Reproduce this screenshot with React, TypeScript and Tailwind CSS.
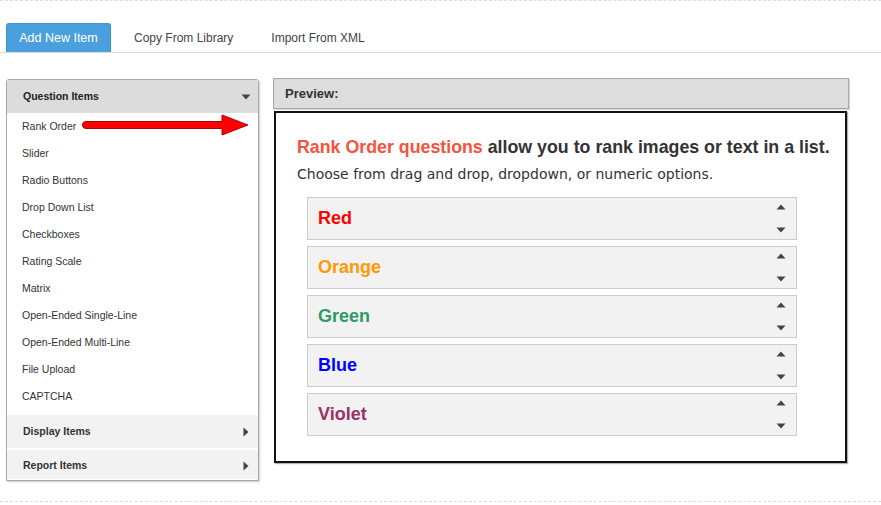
import React from "react";

const items = [
  "Rank Order",
  "Slider",
  "Radio Buttons",
  "Drop Down List",
  "Checkboxes",
  "Rating Scale",
  "Matrix",
  "Open-Ended Single-Line",
  "Open-Ended Multi-Line",
  "File Upload",
  "CAPTCHA",
];

const colors = [
  { name: "Red", cls: "text-[#ff0000]" },
  { name: "Orange", cls: "text-[#ff9900]" },
  { name: "Green", cls: "text-[#2f9a68]" },
  { name: "Blue", cls: "text-[#0000ff]" },
  { name: "Violet", cls: "text-[#993366]" },
];

function UpDown() {
  return (
    <div className="flex flex-col justify-between h-full py-[6px]">
      <svg width="10" height="6" viewBox="0 0 10 6">
        <polygon points="5,0.5 9.5,5.5 0.5,5.5" fill="#444" />
      </svg>
      <svg width="10" height="6" viewBox="0 0 10 6">
        <polygon points="0.5,0.5 9.5,0.5 5,5.5" fill="#444" />
      </svg>
    </div>
  );
}

function RightCaret() {
  return (
    <svg width="6" height="10" viewBox="0 0 6 10">
      <polygon points="0.5,0.5 5.5,5 0.5,9.5" fill="#444" />
    </svg>
  );
}

export default function App() {
  return (
    <div className="w-[881px] h-[505px] bg-white relative overflow-hidden font-['Liberation_Sans',Arial,sans-serif]">
      <div className="border-t border-dashed border-[#dcdcdc]" />
      {/* Tabs */}
      <div className="flex items-end h-[52px] pl-[6px] border-b border-[#dddddd]">
        <div className="h-[29px] w-[105px] bg-[#4aa0dc] border border-[#3f93cf] border-b-0 rounded-t-[3px] flex items-center justify-center text-white text-[12.5px]">
          Add New Item
        </div>
        <div className="h-[29px] flex items-center text-[12px] text-[#444] ml-[23px]">
          Copy From Library
        </div>
        <div className="h-[29px] flex items-center text-[12px] text-[#444] ml-[38px]">
          Import From XML
        </div>
      </div>

      <div className="flex items-start mt-[25px]">
        {/* Left panel */}
        <div className="relative mt-[1px] ml-[6px] w-[253px] h-[402px] border border-[#a8a8a8] rounded-t-[3px] shadow-[1px_1px_2px_rgba(0,0,0,0.2)] flex flex-col bg-white">
          <div className="h-[33px] bg-[#dcdcdc] flex items-center justify-between pl-[16px] pr-[7px] text-[10.5px] font-bold text-[#222]">
            <span>Question Items</span>
            <svg width="10" height="6" viewBox="0 0 10 6">
              <polygon points="0.5,0.5 9.5,0.5 5,5.5" fill="#444" />
            </svg>
          </div>
          <div className="flex flex-col">
            {items.map((t) => (
              <div key={t} className="h-[27px] flex items-center pl-[15px] text-[10.5px] text-[#333]">
                {t}
              </div>
            ))}
          </div>
          <div className="mt-[5px] h-[33px] bg-[#f2f2f2] rounded-[3px] flex items-center justify-between pl-[16px] pr-[9px] text-[10.5px] font-bold text-[#333]">
            <span>Display Items</span>
            <RightCaret />
          </div>
          <div className="mt-[2px] h-[29px] pt-[3px] bg-[#f2f2f2] rounded-t-[3px] flex items-center justify-between pl-[16px] pr-[9px] text-[10.5px] font-bold text-[#333]">
            <span>Report Items</span>
            <RightCaret />
          </div>
          {/* red arrow */}
          <svg className="absolute left-[75px] top-[34px]" width="168" height="24" viewBox="0 0 168 24">
            <path
              d="M4 7.5 L140 7.5 L140 1 L166 11 L140 21 L140 14.5 L4 14.5 Q0.5 14.5 0.5 11 Q0.5 7.5 4 7.5 Z"
              fill="#ff0000"
              stroke="#b00000"
              strokeWidth="1"
            />
          </svg>
        </div>

        {/* Preview */}
        <div className="ml-[14px] flex flex-col">
          <div className="w-[576px] h-[31px] bg-[#dddddd] border border-[#a9a9a9] shadow-[1px_1px_1px_rgba(0,0,0,0.15)] flex items-center pl-[11px] text-[13px] font-bold text-[#333]">
            Preview:
          </div>
          <div className="mt-[2px] ml-[1px] w-[573px] h-[352px] border-2 border-[#111] shadow-[1px_1px_1px_rgba(0,0,0,0.3)] pt-[22px] pl-[21px]">
            <div className="text-[17.8px] font-bold text-[#333] leading-[24px] whitespace-nowrap">
              <span className="text-[#f5533d]">Rank Order questions</span> allow you to rank images or text in a list.
            </div>
            <div className="mt-[4px] text-[14px] text-[#333] font-['DejaVu_Sans',Verdana,sans-serif] leading-[22px]">
              Choose from drag and drop, dropdown, or numeric options.
            </div>
            <div className="mt-[12px] ml-[10px] flex flex-col gap-[6px]">
              {colors.map((c) => (
                <div
                  key={c.name}
                  className="w-[490px] h-[43px] bg-[#f2f2f2] border border-[#cccccc] flex items-center justify-between pl-[10px] pr-[10px]"
                >
                  <span className={`text-[18px] font-bold ${c.cls}`}>{c.name}</span>
                  <UpDown />
                </div>
              ))}
            </div>
          </div>
        </div>
      </div>

      <div className="absolute left-0 right-0 top-[501px] border-t border-dashed border-[#dcdcdc]" />
    </div>
  );
}
